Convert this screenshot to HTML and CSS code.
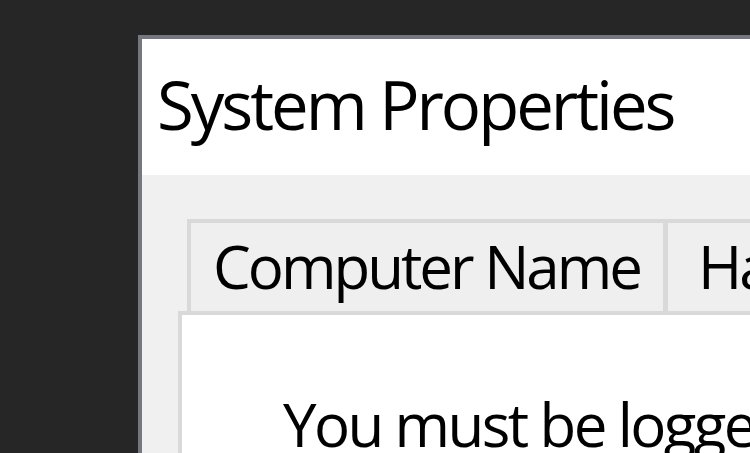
FILE: index.html
```html
<!DOCTYPE html>
<html>
<head>
<meta charset="utf-8">
<link rel="stylesheet" href="styles.css">
</head>
<body>
<div class="window">
  <div class="titlebar"><span class="title">System Properties</span></div>
  <div class="client">
    <div class="tabs">
      <div class="tab tab-first">Computer Name</div>
      <div class="tab tab-next">Hardware</div>
    </div>
    <div class="panel">
      <p class="message">You must be logged on as an administrator</p>
    </div>
  </div>
</div>
</body>
</html>
```
FILE: styles.css
```css
html, body {
  margin: 0;
  padding: 0;
  width: 750px;
  height: 453px;
  overflow: hidden;
  background: #262626;
  font-family: "Open Sans", "Noto Sans", sans-serif;
  color: #000;
}
.window {
  margin: 35px 0 0 138px;
  border-left: 4px solid #74777d;
  border-top: 4px solid #74777d;
  background: #fff;
  width: 608px;
  height: 414px;
  overflow: hidden;
}
.titlebar {
  height: 136px;
  box-sizing: border-box;
  padding: 32px 0 0 15px;
}
.title {
  display: block;
  font-size: 67px;
  line-height: 67px;
  letter-spacing: -3px;
  white-space: nowrap;
}
.client {
  background: #f0f0f0;
  padding: 44px 0 0 36px;
  height: 300px;
}
.tabs {
  display: flex;
  margin-left: 9px;
}
.tab {
  box-sizing: border-box;
  flex-shrink: 0;
  height: 92px;
  border-top: 4px solid #d9d9d9;
  background: #efefef;
  font-size: 60px;
  line-height: 60px;
  letter-spacing: -3px;
  white-space: nowrap;
  padding-top: 13px;
}
.tab-first {
  width: 481px;
  border-left: 4px solid #d9d9d9;
  border-right: 5px solid #d9d9d9;
  padding-left: 22px;
}
.tab-next {
  width: 300px;
  border-right: 4px solid #d9d9d9;
  padding-left: 30px;
}
.panel {
  border-top: 4px solid #d9d9d9;
  border-left: 4px solid #d9d9d9;
  background: #fff;
  height: 300px;
}
.message {
  margin: 0;
  padding: 79px 0 0 101px;
  font-size: 60px;
  line-height: 60px;
  letter-spacing: -2.6px;
  white-space: nowrap;
}
```
